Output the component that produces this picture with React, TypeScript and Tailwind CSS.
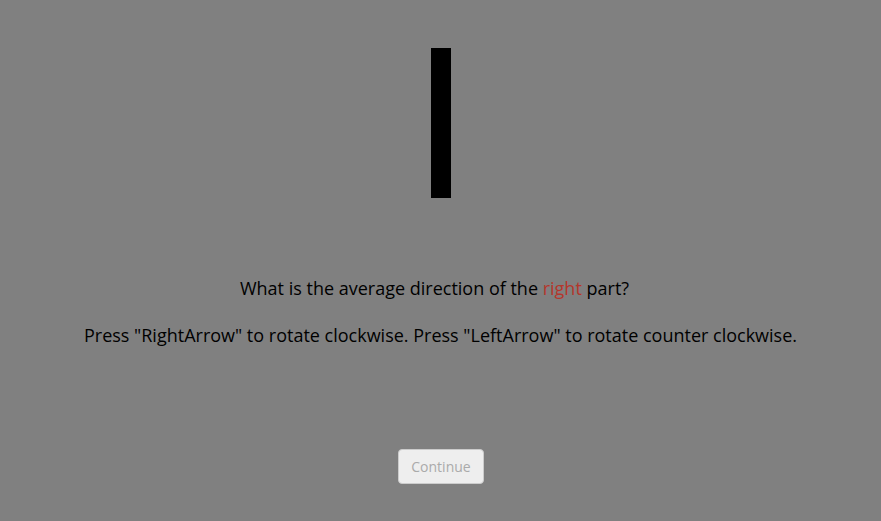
export default function App() {
  return (
    <div
      className="w-full min-h-[521px] bg-[#808080] flex flex-col items-center text-black text-[18px] leading-[1.6]"
      style={{ fontFamily: '"Open Sans", "Noto Sans", sans-serif' }}
    >
      {/* stimulus bar */}
      <div className="mt-[48px] ml-[1px] w-[20px] h-[150px] bg-black" />

      {/* prompt */}
      <div className="mt-[76px] text-center">
        <p className="pr-[12px]">
          What is the average direction of the <span className="text-[#b5362b]">right</span> part?
        </p>
        <p className="mt-[18px]">
          Press "RightArrow" to rotate clockwise. Press "LeftArrow" to rotate counter clockwise.
        </p>
      </div>

      <button
        disabled
        className="mt-[99px] ml-[1px] px-[12px] pt-[7px] pb-[6px] text-[14px] leading-[20px] bg-[#eeeeee] text-[#aaaaaa] border border-[#cccccc] rounded-[4px]"
      >
        Continue
      </button>
    </div>
  );
}
